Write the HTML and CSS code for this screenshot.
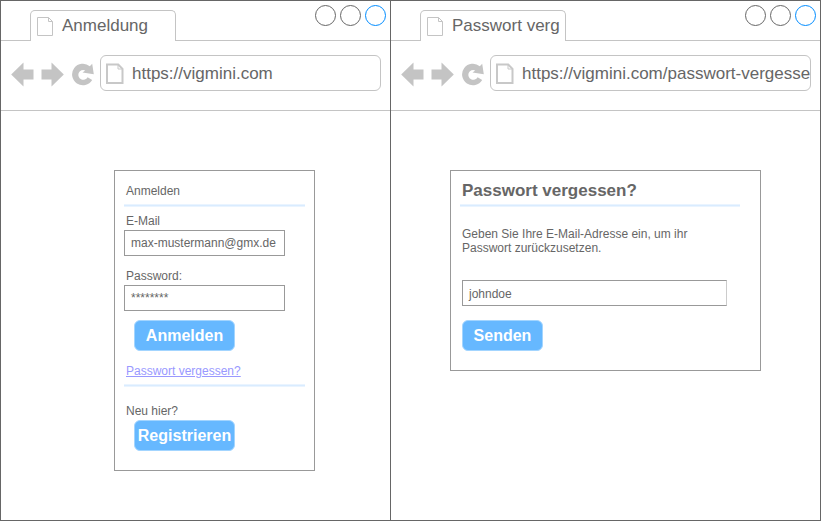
FILE: index.html
```html
<!DOCTYPE html>
<html lang="de">
<head>
<meta charset="utf-8">
<title>Anmeldung</title>
<link rel="stylesheet" href="styles.css">
</head>
<body>
<svg width="0" height="0" class="defs">
  <symbol id="doc" viewBox="0 0 17 19"><path d="M.5.5H11.5L15.5 4.5V18.5H.5ZM11.5.5V4.5H15.5"/></symbol>
  <symbol id="doc-bold" viewBox="0 0 19 21"><path d="M2 1.5H13.2L17.5 5.8V20H2Z" stroke-width="2"/><path d="M13 1.5V6H17.5" stroke-width="1"/></symbol>
  <symbol id="nav" viewBox="0 0 84 26"><path d="M.2 13.5 12.5 1.5V8.5H22.5V18.5H12.5V25.5ZM52.8 13.5 40.5 1.5V8.5H30.5V18.5H40.5V25.5Z"/><path d="M81.2 19A10.8 10.8 0 1 1 78.8 5.2L81.2 2.7 82.8 13.2 71.5 11.4 74.2 9.4A4.9 4.9 0 1 0 76.6 16.2Z"/></symbol>
</svg>
<main class="board">
  <section class="window window-login">
    <header class="tabs">
      <div class="tab"><svg class="tab-icon"><use href="#doc"/></svg><span>Anmeldung</span></div>
      <div class="controls"><i></i><i></i><i class="active"></i></div>
    </header>
    <nav class="toolbar">
      <svg class="nav-icons"><use href="#nav"/></svg>
      <div class="url"><svg class="url-icon"><use href="#doc-bold"/></svg><span>https://vigmini.com</span></div>
    </nav>
    <form class="card login">
      <p class="title">Anmelden</p>
      <hr>
      <label class="email-label">E-Mail</label>
      <div class="field">max-mustermann@gmx.de</div>
      <label class="password-label">Password:</label>
      <div class="field">********</div>
      <button type="button">Anmelden</button>
      <a href="#">Passwort vergessen?</a>
      <hr>
      <p class="new">Neu hier?</p>
      <button type="button" class="register">Registrieren</button>
    </form>
  </section>
  <section class="window window-reset">
    <header class="tabs">
      <div class="tab"><svg class="tab-icon"><use href="#doc"/></svg><span>Passwort verg</span></div>
      <div class="controls"><i></i><i></i><i class="active"></i></div>
    </header>
    <nav class="toolbar">
      <svg class="nav-icons"><use href="#nav"/></svg>
      <div class="url"><svg class="url-icon"><use href="#doc-bold"/></svg><span>https://vigmini.com/passwort-vergesse</span></div>
    </nav>
    <form class="card reset">
      <h1>Passwort vergessen?</h1>
      <hr>
      <p class="hint">Geben Sie Ihre E-Mail-Adresse ein, um ihr<br>Passwort zurückzusetzen.</p>
      <div class="field">johndoe</div>
      <button type="button">Senden</button>
    </form>
  </section>
</main>
</body>
</html>
```
FILE: styles.css
```css
* { box-sizing: border-box; }
body { margin: 0; background: #fff; color: #666; font: 12px/14px "Liberation Sans", Arial, sans-serif; overflow: hidden; }
.defs { position: absolute; }
p, h1 { margin: 0; }
.board { display: flex; width: 821px; height: 521px; }
.window { border: 1px solid #666; flex: none; }
.window-login { width: 391px; }
.window-reset { width: 431px; margin-left: -1px; }

.tabs { display: flex; justify-content: space-between; height: 40px; padding-left: 29px; background: linear-gradient(#c4c4c4, #c4c4c4) 0 39px / 100% 1px no-repeat; }
.tab { display: flex; width: 146px; height: 31px; margin-top: 9px; padding: 6px 0 0 6px; border: 1px solid #c4c4c4; border-bottom: 0; border-radius: 5px 5px 0 0; background: #fff; font-size: 17px; line-height: 20px; white-space: nowrap; }
.tab span { margin: -1px 0 0 8px; }
.tab-icon { width: 17px; height: 19px; flex: none; fill: none; stroke: #c4c4c4; }
.controls { display: flex; gap: 4px; padding: 4px 4px 0 0; }
.controls i { width: 21px; height: 21px; border: 1px solid #666; border-radius: 50%; }
.controls .active { border-color: #008cff; }

.toolbar { display: flex; height: 70px; padding: 14px 9px 0 10px; border-bottom: 1px solid #c4c4c4; }
.nav-icons { width: 84px; height: 26px; margin: 6px 5px 0 0; flex: none; fill: #c4c4c4; }
.url { display: flex; flex: 1; min-width: 0; height: 36px; padding: 7px 0 0 4px; border: 1px solid #c4c4c4; border-radius: 6px; font-size: 17px; line-height: 20px; white-space: nowrap; }
.url-icon { width: 19px; height: 21px; flex: none; fill: none; stroke: #c8c8c8; }
.url span { margin: 1px 0 0 8px; }

.card { display: flex; flex-direction: column; align-items: flex-start; margin-top: 59px; border: 1px solid #999; }
.login { width: 201px; height: 301px; margin-left: 113px; padding: 13px 9px 0; }
.reset { width: 311px; height: 201px; margin-left: 59px; padding: 10px 20px 0 9px; }
hr { width: 100%; height: 3px; margin: 0; border: 0; background: linear-gradient(#eaf4ff 1px, #d9ecff 1px 2px, #eaf4ff 2px); }
.login .title { margin: 0 0 6px 2px; }
.login label { margin-left: 2px; }
.email-label { margin-top: 7px; }
.password-label { margin-top: 13px; }
.field { width: 161px; height: 26px; margin-top: 2px; padding: 5px 6px; border: 1px solid #999; }
button { width: 101px; height: 31px; margin: 9px 0 0 10px; padding: 0; border: 1px solid #a3d5ff; border-radius: 6px; background: #66b8ff; color: #fff; font: bold 16px/20px "Liberation Sans", Arial, sans-serif; white-space: nowrap; }
a { margin: 13px 0 6px 2px; color: #9999ff; }
.new { margin: 17px 0 0 2px; }
.login .register { margin-top: 2px; }
h1 { margin: 0 0 3px 2px; font-size: 17px; line-height: 20px; }
.hint { margin: 20px 0 0 2px; }
.reset .field { width: 265px; margin: 25px 0 0 2px; border-right-color: #ccc; padding-top: 6px; }
.reset button { width: 81px; margin: 14px 0 0 2px; }
```
